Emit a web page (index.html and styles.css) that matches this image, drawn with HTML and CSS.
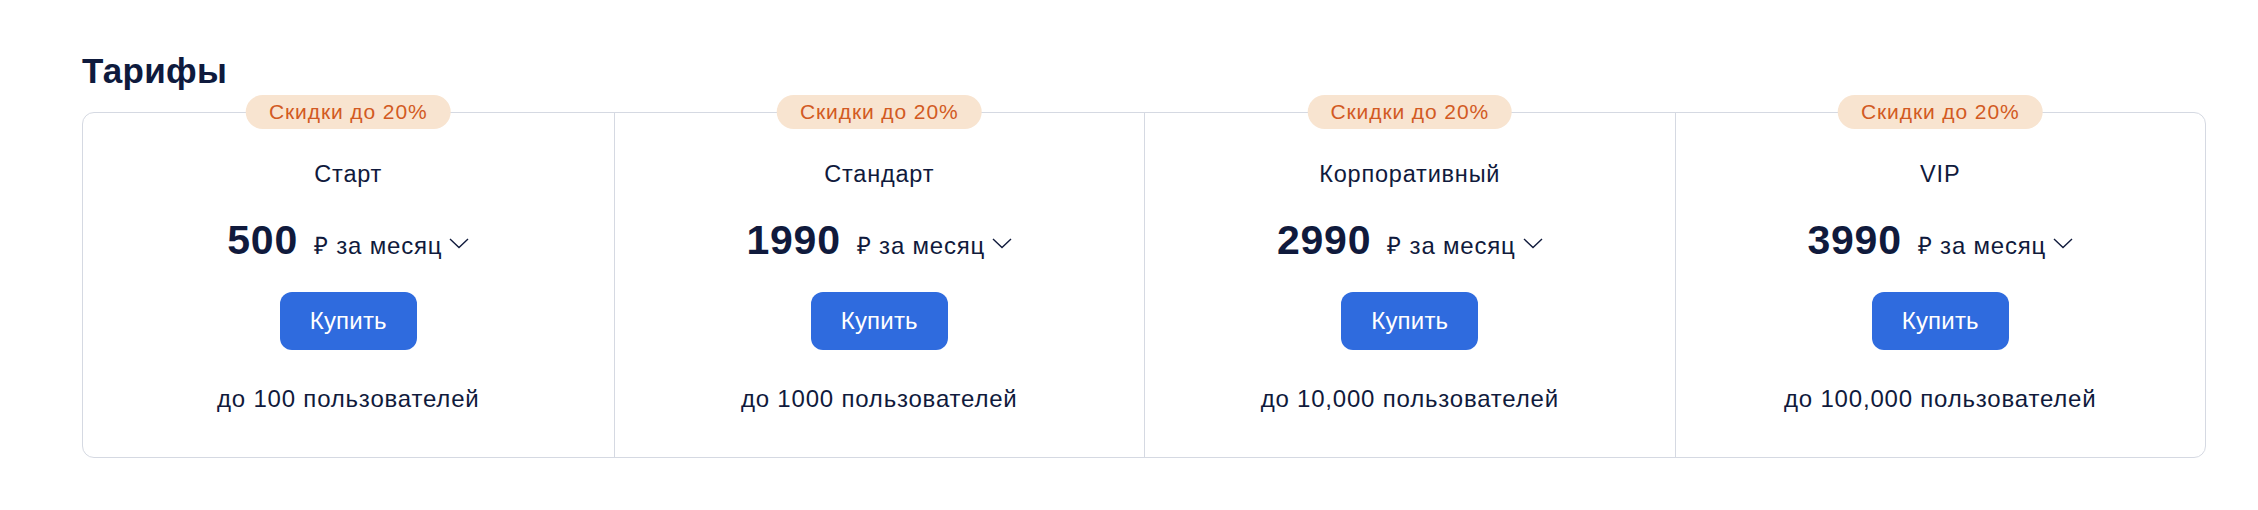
FILE: index.html
```html
<!DOCTYPE html>
<html lang="ru">
<head>
    <meta charset="UTF-8">
    <meta name="viewport" content="width=device-width, initial-scale=1.0">
    <title>Тарифы</title>
    <link rel="stylesheet" href="styles.css">
</head>
<body>
    <div class="container">
        <h1 class="title">Тарифы</h1>

        <div class="plans">
            <div class="plan">
                <span class="badge">Скидки до 20%</span>
                <div class="plan-name">Старт</div>
                <div class="price">
                    <span class="amount">500</span>
                    <span class="period">₽ за месяц</span>
                    <svg class="chevron" width="20" height="11" viewBox="0 0 20 11"><polyline points="1,1 10,9.5 19,1" fill="none" stroke="#101a3c" stroke-width="1.4"/></svg>
                </div>
                <button class="buy">Купить</button>
                <div class="users">до 100 пользователей</div>
            </div>

            <div class="plan">
                <span class="badge">Скидки до 20%</span>
                <div class="plan-name">Стандарт</div>
                <div class="price">
                    <span class="amount">1990</span>
                    <span class="period">₽ за месяц</span>
                    <svg class="chevron" width="20" height="11" viewBox="0 0 20 11"><polyline points="1,1 10,9.5 19,1" fill="none" stroke="#101a3c" stroke-width="1.4"/></svg>
                </div>
                <button class="buy">Купить</button>
                <div class="users">до 1000 пользователей</div>
            </div>

            <div class="plan">
                <span class="badge">Скидки до 20%</span>
                <div class="plan-name">Корпоративный</div>
                <div class="price">
                    <span class="amount">2990</span>
                    <span class="period">₽ за месяц</span>
                    <svg class="chevron" width="20" height="11" viewBox="0 0 20 11"><polyline points="1,1 10,9.5 19,1" fill="none" stroke="#101a3c" stroke-width="1.4"/></svg>
                </div>
                <button class="buy">Купить</button>
                <div class="users">до 10,000 пользователей</div>
            </div>

            <div class="plan">
                <span class="badge">Скидки до 20%</span>
                <div class="plan-name">VIP</div>
                <div class="price">
                    <span class="amount">3990</span>
                    <span class="period">₽ за месяц</span>
                    <svg class="chevron" width="20" height="11" viewBox="0 0 20 11"><polyline points="1,1 10,9.5 19,1" fill="none" stroke="#101a3c" stroke-width="1.4"/></svg>
                </div>
                <button class="buy">Купить</button>
                <div class="users">до 100,000 пользователей</div>
            </div>
        </div>
    </div>
</body>
</html>
```

FILE: styles.css
```css
body {
    margin: 0;
    padding: 0;
    background: #fff;
    font-family: "Liberation Sans", Arial, sans-serif;
    color: #101a3c;
}
.container {
    padding: 51px 52px 0 82px;
}
.title {
    margin: 0 0 21px;
    font-size: 35px;
    line-height: 40px;
    font-weight: bold;
    letter-spacing: 0.3px;
    color: #0e1a3d;
}
.plans {
    display: grid;
    grid-template-columns: repeat(4, 1fr);
    border: 1px solid #d5d9e2;
    border-radius: 12px;
}
.plan {
    position: relative;
    display: flex;
    flex-direction: column;
    align-items: center;
    padding: 47px 0 44px;
}
.plan + .plan {
    border-left: 1px solid #d5d9e2;
}
.badge {
    position: absolute;
    top: -18px;
    left: 50%;
    transform: translateX(-50%);
    height: 34px;
    line-height: 34px;
    padding: 0 23px;
    border-radius: 17px;
    background: #f8e4d0;
    color: #d25a23;
    font-size: 21px;
    letter-spacing: 0.9px;
    white-space: nowrap;
}
.plan-name {
    font-size: 23.5px;
    line-height: 28px;
    letter-spacing: 0.8px;
}
.price {
    display: flex;
    align-items: baseline;
    margin-top: 28px;
    height: 48px;
    line-height: 48px;
}
.amount {
    font-size: 41px;
    font-weight: bold;
    letter-spacing: 0.8px;
}
.period {
    margin-left: 16px;
    font-size: 24px;
    letter-spacing: 0.8px;
}
.chevron {
    margin-left: 7px;
    align-self: center;
    position: relative;
    top: 3px;
}
.buy {
    margin-top: 28px;
    height: 58px;
    padding: 0 30px;
    border: none;
    border-radius: 12px;
    background: #2f6bde;
    color: #fff;
    font-family: "Liberation Sans", Arial, sans-serif;
    font-size: 24px;
    font-weight: 500;
    letter-spacing: 0.2px;
    cursor: pointer;
}
.users {
    margin-top: 35px;
    font-size: 24px;
    line-height: 28px;
    letter-spacing: 0.8px;
}
```
